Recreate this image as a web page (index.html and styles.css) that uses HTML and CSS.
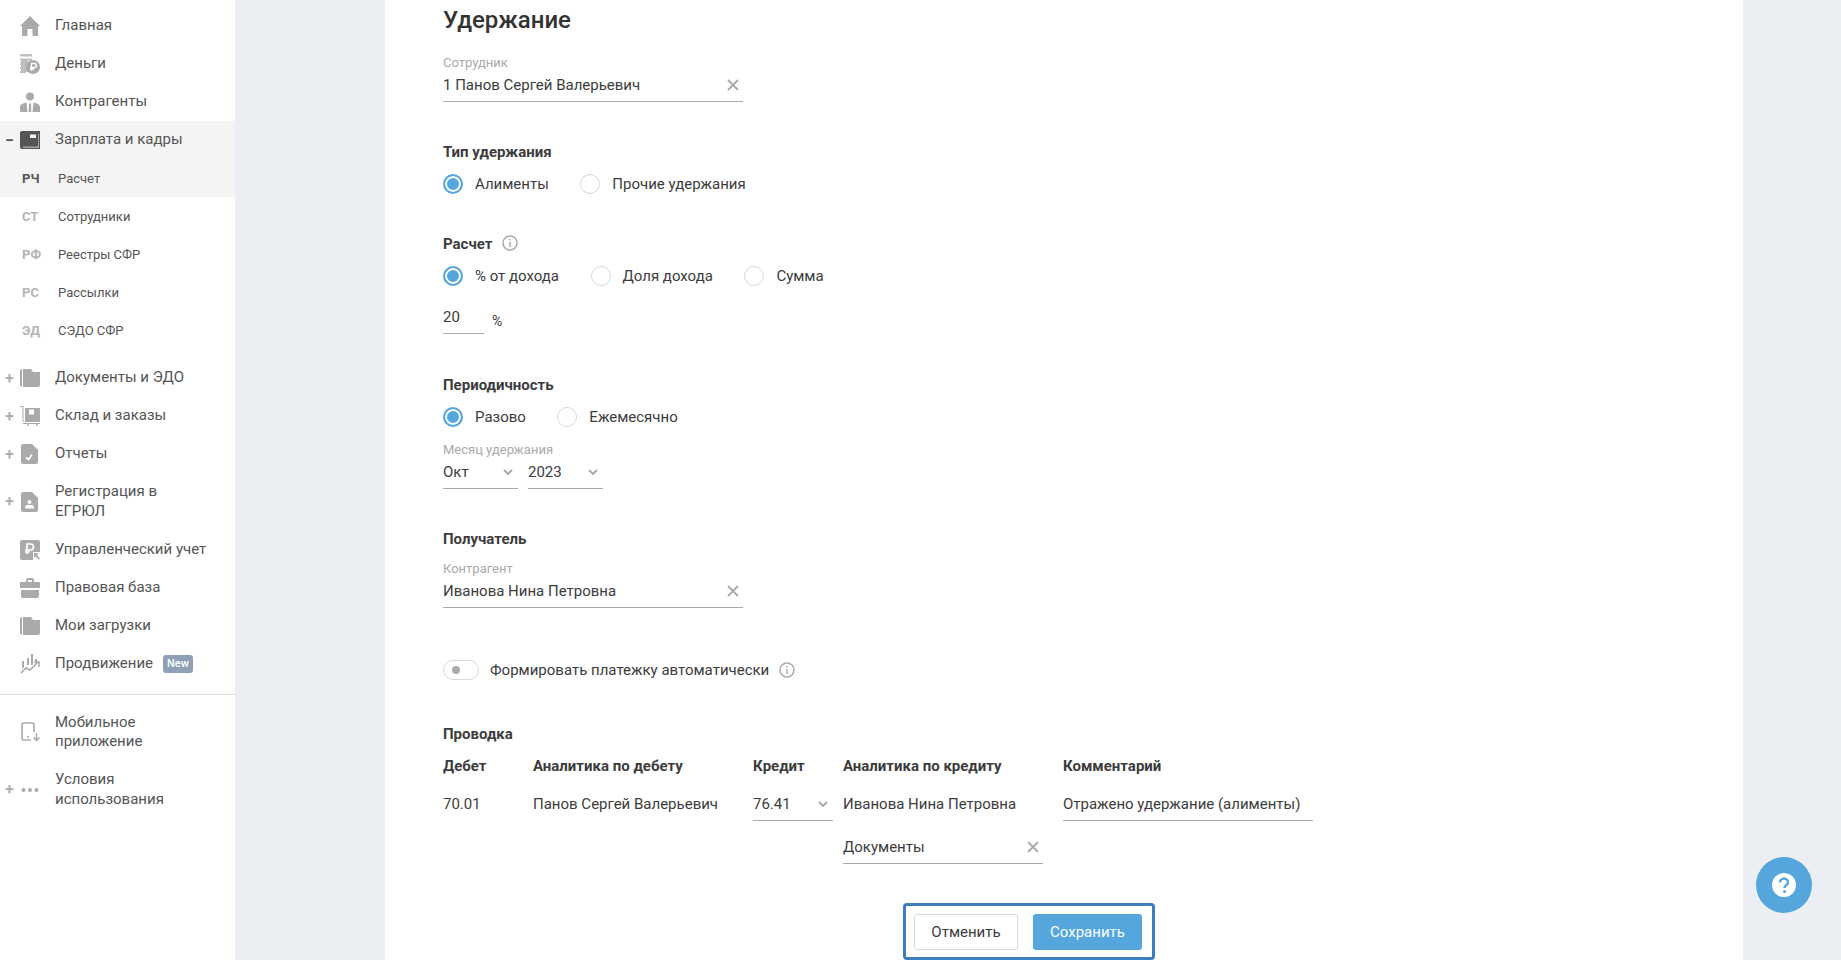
FILE: index.html
```html
<!DOCTYPE html>
<html lang="ru">
<head>
    <meta charset="UTF-8">
    <title>Удержание</title>
    <link rel="stylesheet" href="styles.css">
</head>
<body>
    <nav class="sidebar">
        <div class="menu-item">
            <span class="toggle"></span>
            <svg class="icon" viewBox="0 0 20 20"><path d="M10 0 20 10 18 10 18 20 12.500 20 12.500 13 7.500 13 7.500 20 2 20 2 10 0 10Z"/></svg>
            <span class="menu-text">Главная</span>
        </div>
        <div class="menu-item">
            <span class="toggle"></span>
            <svg class="icon" viewBox="0 0 20 20"><path d="M0 0H12V2.500H0ZM0 4.500H12V6.500H0ZM0 9H6V11H0ZM0 13H5V15H0ZM0 17H6V19H0ZM1 6H8V18H1Z" opacity=".75"/><circle cx="13" cy="13" r="7"/><path d="M11.500 17V9.500H14.500A2 2 0 0 1 14.500 13.500H10M10 15H14" fill="none" stroke="#fff" stroke-width="1.300"/></svg>
            <span class="menu-text">Деньги</span>
        </div>
        <div class="menu-item">
            <span class="toggle"></span>
            <svg class="icon" viewBox="0 0 20 20"><circle cx="10" cy="4.500" r="4"/><path d="M0 20V15Q0 11.500 6.500 10.500L7.500 20ZM20 20V15Q20 11.500 13.500 10.500L12.500 20ZM9 11.500H11L11.300 20H8.700Z"/></svg>
            <span class="menu-text">Контрагенты</span>
        </div>
        <div class="menu-group active">
            <div class="menu-item">
                <span class="toggle">&minus;</span>
                <svg class="icon icon-dark" viewBox="0 0 20 20"><path d="M2 1H20V19H2Q0 19 0 17V3Q0 1 2 1Z"/><path d="M10 4.500H16V8H10Z" fill="#f4f4f4"/><path d="M3 16.500H18V4H19V18H3Z" fill="#f4f4f4" opacity=".5"/></svg>
                <span class="menu-text">Зарплата и кадры</span>
            </div>
            <div class="sub-item">
                <span class="sub-code">РЧ</span>
                <span class="sub-text">Расчет</span>
            </div>
        </div>
        <div class="sub-item">
            <span class="sub-code">СТ</span>
            <span class="sub-text">Сотрудники</span>
        </div>
        <div class="sub-item">
            <span class="sub-code">РФ</span>
            <span class="sub-text">Реестры СФР</span>
        </div>
        <div class="sub-item">
            <span class="sub-code">РС</span>
            <span class="sub-text">Рассылки</span>
        </div>
        <div class="sub-item sub-last">
            <span class="sub-code">ЭД</span>
            <span class="sub-text">СЭДО СФР</span>
        </div>
        <div class="menu-item">
            <span class="toggle">+</span>
            <svg class="icon" viewBox="0 0 20 20"><path d="M0 3Q0 1 2 1V19Q0 19 0 17Z"/><path d="M3 1H11L13 4H20V17Q20 19 18 19H3Z"/></svg>
            <span class="menu-text">Документы и ЭДО</span>
        </div>
        <div class="menu-item">
            <span class="toggle">+</span>
            <svg class="icon" viewBox="0 0 20 20"><path d="M0 0H3.500V16H2.500V1H0Z"/><path d="M5 2H20V16H5ZM9 3.500V8.500H14V3.500Z"/><path d="M3 17H20V18H3Z"/><circle cx="8" cy="19" r="1"/><circle cx="17" cy="19" r="1"/></svg>
            <span class="menu-text">Склад и заказы</span>
        </div>
        <div class="menu-item">
            <span class="toggle">+</span>
            <svg class="icon" viewBox="0 0 20 20"><path d="M3 0H12L18 6V18Q18 20 16 20H3Q1 20 1 18V2Q1 0 3 0Z"/><path d="M6 13.500 8.500 15.500 12 10.500" fill="none" stroke="#fff" stroke-width="1.800"/></svg>
            <span class="menu-text">Отчеты</span>
        </div>
        <div class="menu-item">
            <span class="toggle">+</span>
            <svg class="icon" viewBox="0 0 20 20"><path d="M3 0H12L18 6V18Q18 20 16 20H3Q1 20 1 18V2Q1 0 3 0Z"/><circle cx="9.500" cy="10" r="2" fill="#fff"/><path d="M5 16.500Q5 13 7 13H12Q14 13 14 16.500Z" fill="#fff"/></svg>
            <span class="menu-text">Регистрация в ЕГРЮЛ</span>
        </div>
        <div class="menu-item">
            <span class="toggle"></span>
            <svg class="icon" viewBox="0 0 20 20"><path d="M2 0H18Q20 0 20 2V12H13V20H2Q0 20 0 18V2Q0 0 2 0Z"/><path d="M7 14V4H10.500A3 3 0 0 1 10.500 10H5M5 12H10" fill="none" stroke="#fff" stroke-width="1.700"/><path d="M14 13H18V14.500H16.500L20 18.500 18.800 19.700 15.500 16V17.500H14Z"/></svg>
            <span class="menu-text">Управленческий учет</span>
        </div>
        <div class="menu-item">
            <span class="toggle"></span>
            <svg class="icon" viewBox="0 0 20 20"><path d="M6 4V2Q6 0 8 0H12Q14 0 14 2V4H12V2H8V4Z"/><path d="M0 5Q0 4 1 4H19Q20 4 20 5V10H0ZM1 12H19V18Q19 20 17 20H3Q1 20 1 18Z"/></svg>
            <span class="menu-text">Правовая база</span>
        </div>
        <div class="menu-item">
            <span class="toggle"></span>
            <svg class="icon" viewBox="0 0 20 20"><path d="M0 3Q0 1 2 1V19Q0 19 0 17Z"/><path d="M3 1H11L13 4H20V17Q20 19 18 19H3Z"/></svg>
            <span class="menu-text">Мои загрузки</span>
        </div>
        <div class="menu-item">
            <span class="toggle"></span>
            <svg class="icon" viewBox="0 0 20 20"><path d="M2 7H4V13L2 15ZM7 4H9V11L7 11ZM11 0H13V11L11 11ZM15 5H17V8L15 10Z"/><path d="M1 19 6 14 10 16 18 8M14 8H19V13" fill="none" stroke="#aaa" stroke-width="1.500"/></svg>
            <span class="menu-text">Продвижение</span>
            <span class="badge">New</span>
        </div>
        <div class="menu-divider"></div>
        <div class="menu-item">
            <span class="toggle"></span>
            <svg class="icon" viewBox="0 0 20 20"><path d="M11 18H4Q2 18 2 16V3Q2 1 4 1H12Q14 1 14 3V10" fill="none" stroke="#aaa" stroke-width="1.600"/><path d="M16.500 11V18M13.500 15.500 16.500 18.500 19.500 15.500" fill="none" stroke="#aaa" stroke-width="1.500"/><circle cx="8" cy="15" r="1"/></svg>
            <span class="menu-text">Мобильное приложение</span>
        </div>
        <div class="menu-item">
            <span class="toggle">+</span>
            <svg class="icon" viewBox="0 0 20 20"><circle cx="3.500" cy="10" r="2"/><circle cx="10" cy="10" r="2"/><circle cx="16.500" cy="10" r="2"/></svg>
            <span class="menu-text">Условия использования</span>
        </div>
    </nav>

    <main class="content">
        <h1 class="title">Удержание</h1>

        <div class="field field-wide">
            <label class="field-label">Сотрудник</label>
            <div class="input">
                <span>1 Панов Сергей Валерьевич</span>
                <svg class="clear" viewBox="0 0 12 12"><path d="M1 1 11 11M11 1 1 11"/></svg>
            </div>
        </div>

        <h3 class="section-title">Тип удержания</h3>
        <div class="radios">
            <span class="radio checked"></span><span class="radio-label">Алименты</span>
            <span class="radio"></span><span class="radio-label">Прочие удержания</span>
        </div>

        <h3 class="section-title">Расчет
            <svg class="info info-title" viewBox="0 0 16 16"><circle cx="8" cy="8" r="7"/><path d="M8 7V12M8 4V5.500"/></svg>
        </h3>
        <div class="radios">
            <span class="radio checked"></span><span class="radio-label">% от дохода</span>
            <span class="radio"></span><span class="radio-label">Доля дохода</span>
            <span class="radio"></span><span class="radio-label">Сумма</span>
        </div>
        <div class="percent">
            <div class="input input-percent"><span>20</span></div>
            <span class="percent-sign">%</span>
        </div>

        <h3 class="section-title">Периодичность</h3>
        <div class="radios">
            <span class="radio checked"></span><span class="radio-label">Разово</span>
            <span class="radio"></span><span class="radio-label">Ежемесячно</span>
        </div>
        <div class="field field-month">
            <label class="field-label">Месяц удержания</label>
            <div class="selects">
                <div class="input select">
                    <span>Окт</span>
                    <svg class="chevron" viewBox="0 0 10 6"><path d="M1 1 5 5 9 1"/></svg>
                </div>
                <div class="input select">
                    <span>2023</span>
                    <svg class="chevron" viewBox="0 0 10 6"><path d="M1 1 5 5 9 1"/></svg>
                </div>
            </div>
        </div>

        <h3 class="section-title">Получатель</h3>
        <div class="field field-wide field-recipient">
            <label class="field-label">Контрагент</label>
            <div class="input">
                <span>Иванова Нина Петровна</span>
                <svg class="clear" viewBox="0 0 12 12"><path d="M1 1 11 11M11 1 1 11"/></svg>
            </div>
        </div>

        <div class="switch-row">
            <span class="switch"><span class="switch-knob"></span></span>
            <span class="switch-label">Формировать платежку автоматически</span>
            <svg class="info" viewBox="0 0 16 16"><circle cx="8" cy="8" r="7"/><path d="M8 7V12M8 4V5.500"/></svg>
        </div>

        <h3 class="section-title section-posting">Проводка</h3>
        <div class="posting">
            <div class="posting-head">Дебет</div>
            <div class="posting-head">Аналитика по дебету</div>
            <div class="posting-head">Кредит</div>
            <div class="posting-head">Аналитика по кредиту</div>
            <div class="posting-head">Комментарий</div>

            <div class="posting-cell">70.01</div>
            <div class="posting-cell">Панов Сергей Валерьевич</div>
            <div class="input select-credit">
                <span>76.41</span>
                <svg class="chevron" viewBox="0 0 10 6"><path d="M1 1 5 5 9 1"/></svg>
            </div>
            <div class="posting-cell">Иванова Нина Петровна</div>
            <div class="input"><span>Отражено удержание (алименты)</span></div>

            <div class="input input-docs">
                <span>Документы</span>
                <svg class="clear" viewBox="0 0 12 12"><path d="M1 1 11 11M11 1 1 11"/></svg>
            </div>
        </div>

        <div class="actions">
            <div class="actions-box">
                <button class="btn btn-cancel">Отменить</button>
                <button class="btn btn-save">Сохранить</button>
            </div>
        </div>
    </main>

    <button class="help">
        <svg viewBox="0 0 24 24" width="24" height="24"><circle cx="12" cy="12" r="12" fill="#fff"/><path d="M8 9.500A4 4 0 0 1 16 9.500C16 12 12.500 12 12.500 15" fill="none" stroke="#54a6dd" stroke-width="2.400"/><circle cx="12.500" cy="18.500" r="1.500" fill="#54a6dd"/></svg>
    </button>
</body>
</html>
```

FILE: styles.css
```css
html, body {
    height: 100%;
}

body {
    margin: 0;
    height: 960px;
    overflow: hidden;
    display: flex;
    background-color: #ebeff3;
    font-family: Roboto, "Liberation Sans", sans-serif;
    font-size: 15px;
    color: #3c3c3c;
}

/* sidebar */
.sidebar {
    width: 235px;
    flex-shrink: 0;
    box-sizing: border-box;
    padding-top: 7px;
    background: white;
}

.menu-item {
    display: flex;
    align-items: center;
    padding: 9.25px 27px 9.25px 5px;
    line-height: 19.5px;
    color: #555;
}

.toggle {
    width: 15px;
    flex-shrink: 0;
    font-size: 16px;
    font-weight: 500;
    line-height: 19px;
    color: #aaa;
}

.active .toggle {
    color: #555;
    font-weight: 700;
}

.icon {
    width: 20px;
    height: 20px;
    flex-shrink: 0;
    fill: #aaa;
    margin: -1px 15px -1px 0;
}

.icon-dark {
    fill: #555;
}

.active {
    background-color: #f4f4f4;
}

.sub-item {
    display: flex;
    align-items: center;
    height: 38px;
    padding-left: 22px;
    font-size: 13px;
    color: #555;
}

.sub-last {
    margin-bottom: 10px;
}

.sub-code {
    width: 36px;
    font-weight: 700;
    font-size: 13px;
    color: #b4b4b4;
}

.active .sub-code {
    color: #555;
}

.badge {
    flex-shrink: 0;
    margin-left: 10px;
    padding: 0 4px;
    background-color: #8fa1b6;
    border-radius: 3px;
    font-size: 11px;
    font-weight: 500;
    line-height: 18px;
    color: white;
}

.menu-divider {
    margin: 11px 0 9px;
    border-top: 1px solid #dcdcdc;
}

/* form */
.content {
    width: 1358px;
    height: 960px;
    box-sizing: border-box;
    margin-left: 150px;
    padding: 6px 128px 0 58px;
    background: white;
}

.title {
    margin: 0 0 20px;
    font-size: 24px;
    font-weight: 500;
    line-height: 28px;
    color: #333;
}

.field-label {
    display: block;
    box-sizing: border-box;
    height: 16px;
    padding-top: 1px;
    font-size: 13px;
    line-height: 15px;
    color: #aaa;
}

.field-wide {
    width: 300px;
}

.input {
    display: flex;
    align-items: center;
    justify-content: space-between;
    height: 32px;
    box-sizing: border-box;
    padding: 0 4px 2px 0;
    border-bottom: 1px solid #aaa;
}

.clear {
    width: 12px;
    height: 12px;
    fill: none;
    stroke: #aaa;
    stroke-width: 1.800;
}

.chevron {
    width: 10px;
    height: 6px;
    fill: none;
    stroke: #aaa;
    stroke-width: 2;
}

.section-title {
    display: flex;
    align-items: center;
    gap: 10px;
    margin: 40px 0 12px;
    font-size: 15px;
    font-weight: 700;
    line-height: 20px;
}

.info {
    width: 16px;
    height: 16px;
    fill: none;
    stroke: #aaa;
    stroke-width: 1.500;
}

.info-title {
    margin-top: -2px;
}

.radios {
    display: flex;
    align-items: center;
    height: 20px;
}

.radio {
    width: 20px;
    height: 20px;
    box-sizing: border-box;
    border: 1px solid #d8d8d8;
    border-radius: 50%;
    margin-right: 12px;
    flex-shrink: 0;
}

.radio.checked {
    border: 2px solid #54a6dd;
    background: #54a6dd;
    box-shadow: inset 0 0 0 2px white;
}

.radio-label {
    margin-right: 31.5px;
}

.percent {
    display: flex;
    align-items: flex-end;
    margin: 14px 0 41px;
    height: 34px;
}

.input-percent {
    width: 41px;
    height: 34px;
    padding-bottom: 0;
}

.percent-sign {
    margin-left: 8px;
    margin-bottom: 5px;
    font-size: 14px;
}

.field-month {
    margin-top: 14px;
}

.selects {
    display: flex;
    gap: 10px;
}

.select {
    width: 75px;
    padding-right: 5px;
}

.field-recipient {
    margin-top: -1px;
}

.switch-row {
    display: flex;
    align-items: center;
    margin-top: 52px;
    height: 20px;
}

.switch {
    display: flex;
    align-items: center;
    width: 36px;
    height: 20px;
    box-sizing: border-box;
    padding-left: 8px;
    border: 1px solid #d8d8d8;
    border-radius: 10px;
}

.switch-knob {
    width: 8px;
    height: 8px;
    border-radius: 50%;
    background: #aaa;
}

.switch-label {
    margin: 0 10px 0 11px;
}

.section-posting {
    margin-top: 44px;
}

.posting {
    display: grid;
    grid-template-columns: 90px 220px 90px 220px 250px;
    grid-template-rows: 20px 33px 33px;
    row-gap: 12px;
    align-items: start;
}

.posting .input {
    height: 33px;
    padding-bottom: 1px;
}

.posting-head {
    font-size: 15px;
    font-weight: 700;
    line-height: 20px;
}

.posting-cell {
    line-height: 32px;
}

.select-credit {
    width: 80px;
    padding-right: 5px;
}

.posting .input-docs {
    grid-column: 4;
    grid-row: 3;
    width: 200px;
    margin-top: -2px;
}

.actions {
    display: flex;
    justify-content: center;
    margin-top: 37px;
}

.actions-box {
    display: flex;
    gap: 15px;
    width: 252px;
    height: 57px;
    box-sizing: border-box;
    padding: 8px;
    border: 3px solid #3d7ebf;
    border-radius: 4px;
}

.btn {
    height: 36px;
    border-radius: 3px;
    font-family: inherit;
    font-size: 15px;
    cursor: pointer;
}

.btn-cancel {
    width: 104px;
    background: white;
    border: 1px solid #d8d8d8;
    color: #3c3c3c;
}

.btn-save {
    width: 109px;
    background: #54a6dd;
    border: 0;
    color: white;
}

.help {
    position: absolute;
    left: 1756px;
    top: 857px;
    display: flex;
    align-items: center;
    justify-content: center;
    width: 56px;
    height: 56px;
    padding: 0;
    border: 0;
    border-radius: 50%;
    background: #54a6dd;
}
```
